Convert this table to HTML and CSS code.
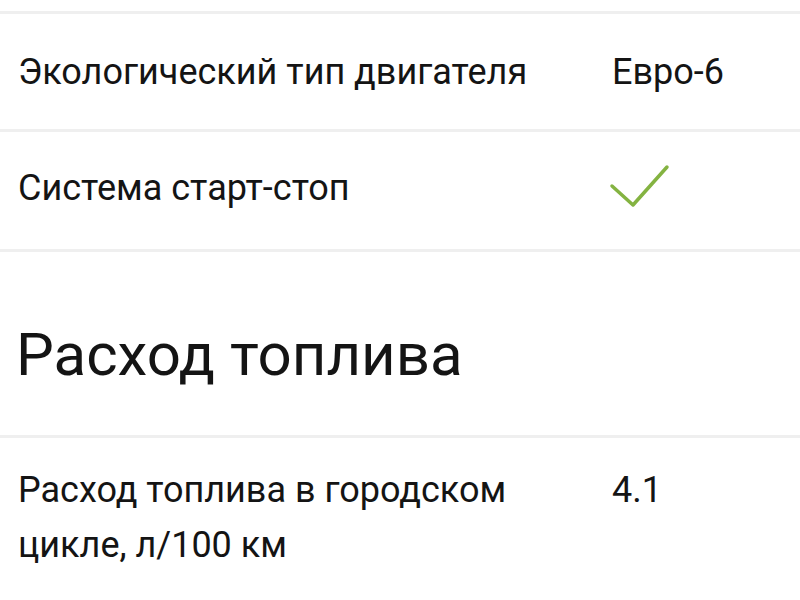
FILE: index.html
```html
<!DOCTYPE html>
<html lang="ru">
<head>
<meta charset="utf-8">
<link rel="stylesheet" href="styles.css">
</head>
<body>
<div class="page">
  <div class="row row-first">
    <div class="label">Экологический тип двигателя</div>
    <div class="value">Евро-6</div>
  </div>
  <div class="row row-second">
    <div class="label">Система старт-стоп</div>
    <div class="value"><svg class="check" width="64" height="44" viewBox="0 0 64 44"><path d="M4 22 L25 41 L59 3" fill="none" stroke="#84b341" stroke-width="3.5" stroke-linecap="round" stroke-linejoin="round"/></svg></div>
  </div>
  <div class="section">
    <h2 class="title">Расход топлива</h2>
  </div>
  <div class="row row-multi">
    <div class="label">Расход топлива в городском цикле, л/100 км</div>
    <div class="value">4.1</div>
  </div>
</div>
</body>
</html>
```
FILE: styles.css
```css
html, body {
  margin: 0;
  padding: 0;
  background: #fff;
}
.page {
  font-family: Roboto, "Noto Sans", sans-serif;
  color: #141414;
  padding-top: 11px;
}
.row {
  display: flex;
  box-sizing: border-box;
  border-top: 3px solid #efefef;
  align-items: center;
  padding-left: 18px;
}
.row-first {
  height: 118px;
}
.row-second {
  height: 120px;
  padding-bottom: 6px;
}
.label {
  box-sizing: border-box;
  width: 594px;
  padding-right: 24px;
  font-size: 36px;
}
.value {
  font-size: 36px;
}
.check {
  display: block;
  margin-left: -4px;
  margin-top: -4px;
}
.section {
  box-sizing: border-box;
  border-top: 3px solid #efefef;
  height: 186px;
  display: flex;
  align-items: center;
  padding-left: 16px;
  padding-top: 22px;
}
.title {
  margin: 0;
  font-weight: 400;
  font-size: 60px;
}
.row-multi {
  align-items: flex-start;
  padding-top: 25px;
}
.row-multi .label,
.row-multi .value {
  line-height: 55px;
}
```
